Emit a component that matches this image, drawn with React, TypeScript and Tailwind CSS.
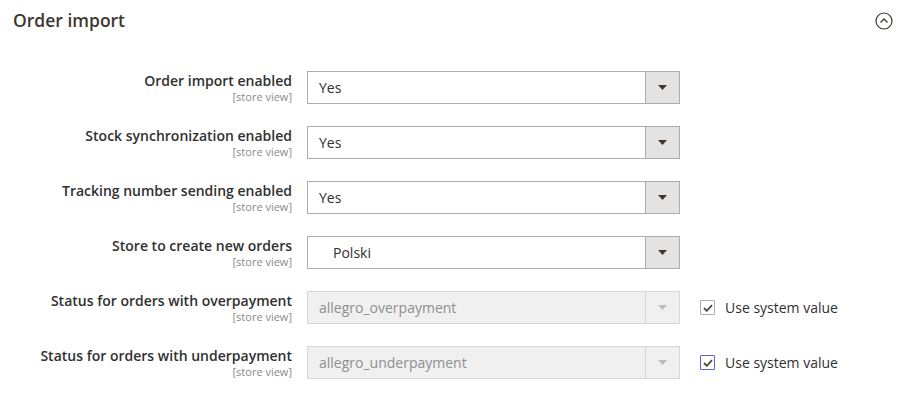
import React from 'react';

type Row = {
  label: string;
  value: string;
  indent?: boolean;
  disabled?: boolean;
  focused?: boolean;
};

const rows: Row[] = [
  { label: 'Order import enabled', value: 'Yes' },
  { label: 'Stock synchronization enabled', value: 'Yes' },
  { label: 'Tracking number sending enabled', value: 'Yes' },
  { label: 'Store to create new orders', value: 'Polski', indent: true },
  { label: 'Status for orders with overpayment', value: 'allegro_overpayment', disabled: true },
  { label: 'Status for orders with underpayment', value: 'allegro_underpayment', disabled: true, focused: true },
];

function Select({ value, indent, disabled }: Row) {
  return (
    <div
      className={`flex h-[33px] w-[373px] border ${
        disabled ? 'border-[#d6d6d6] bg-[#f0f0f0]' : 'border-[#adadad] bg-white'
      }`}
    >
      <div
        className={`flex flex-1 items-center text-[14px] ${indent ? 'pl-[25px]' : 'pl-[11px]'} ${
          disabled ? 'text-[#8f8f8f]' : 'text-[#303030]'
        }`}
      >
        {value}
      </div>
      <div
        className={`flex w-[34px] items-center justify-center border-l ${
          disabled ? 'border-[#d6d6d6] bg-[#f0f0f0]' : 'border-[#adadad] bg-[#e3e3e3]'
        }`}
      >
        <svg width="9" height="5" viewBox="0 0 9 5">
          <path d="M0 0h9L4.5 5z" fill={disabled ? '#bdbdbd' : '#41362f'} />
        </svg>
      </div>
    </div>
  );
}

function SystemValue({ focused }: { focused?: boolean }) {
  return (
    <div className="ml-[20px] flex h-[33px] items-center">
      <span
        className={`flex h-[15px] w-[15px] items-center justify-center rounded-[1px] border bg-white ${
          focused ? 'border-[#5c63d8]' : 'border-[#adadad]'
        }`}
      >
        <svg width="10" height="8" viewBox="0 0 10 8">
          <path d="M1 4l2.8 2.8L9 1.2" fill="none" stroke="#514943" strokeWidth="1.8" />
        </svg>
      </span>
      <span className="ml-[10px] text-[14px] text-[#303030]">Use system value</span>
    </div>
  );
}

export default function App() {
  return (
    <div className="h-[402px] w-[921px] bg-white font-['Open_Sans',sans-serif] text-[#303030]">
      <div className="flex items-center justify-between pl-[13px] pr-[28px] pt-[7px]">
        <h2 className="text-[17.5px] font-semibold leading-[26px] text-[#41362f]">Order import</h2>
        <svg width="18" height="18" viewBox="0 0 18 18" className="mt-[1px]">
          <circle cx="9" cy="9" r="8" fill="none" stroke="#41362f" strokeWidth="1.2" />
          <path d="M5.5 10.5L9 7l3.5 3.5" fill="none" stroke="#41362f" strokeWidth="1.3" />
        </svg>
      </div>

      <div className="mt-[38px] flex flex-col gap-[22px]">
        {rows.map((r) => (
          <div key={r.label} className="flex">
            <div className="flex w-[292px] flex-col items-end">
              <span className="text-[14px] font-semibold leading-[19px] text-[#303030]">{r.label}</span>
              <span className="text-[11px] leading-[13px] text-[#8a8a8a]">[store view]</span>
            </div>
            <div className="ml-[15px]">
              <Select {...r} />
            </div>
            {r.disabled && <SystemValue focused={r.focused} />}
          </div>
        ))}
      </div>
    </div>
  );
}
